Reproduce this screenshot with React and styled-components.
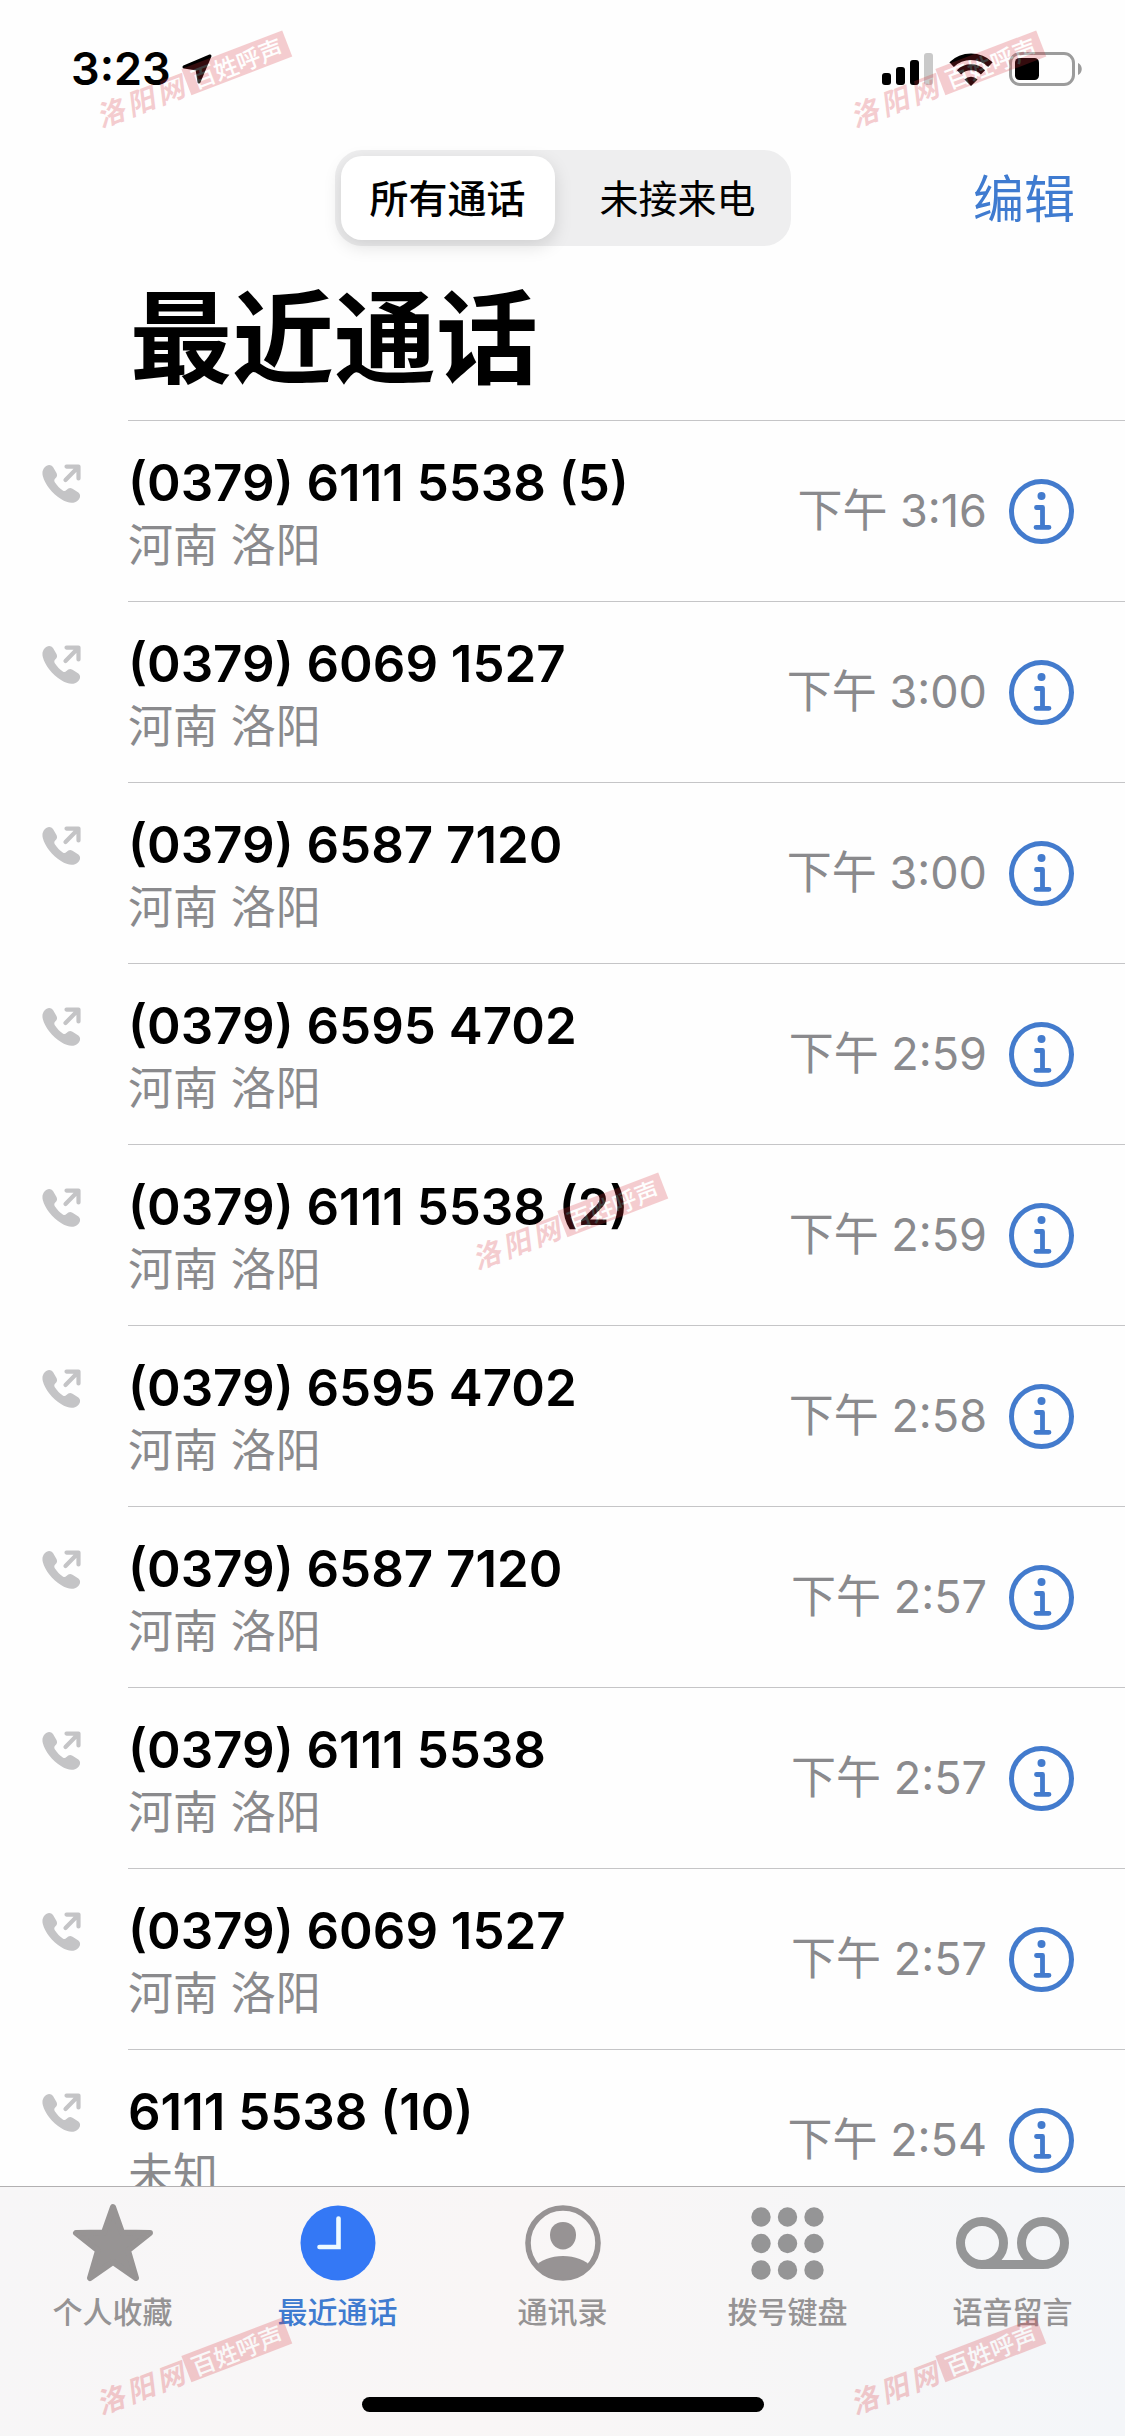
import React, { useState } from "react";
import styled, { createGlobalStyle } from "styled-components";

const GlobalStyle = createGlobalStyle`
  * { box-sizing: border-box; }
  body { margin: 0; background: #fefefe; }
  button { border: 0; padding: 0; background: none; font: inherit; color: inherit; cursor: pointer; }
  svg { display: block; }
`;

const Screen = styled.div`
  position: relative;
  display: flex;
  flex-direction: column;
  height: 100vh;
  overflow: hidden;
  background: #fefefe;
  color: #000;
  font-family: Inter, "Noto Sans CJK SC", sans-serif;
`;

const StatusBar = styled.div`
  flex: none;
  display: flex;
  align-items: center;
  justify-content: space-between;
  height: 138px;
  padding: 0 42px 0 71px;
`;

const StatusGroup = styled.div`
  display: flex;
  align-items: center;
  gap: ${(p) => p.$gap}px;
`;

const Clock = styled.time`
  font-size: 45px;
  line-height: 54px;
  font-weight: 600;
`;

const NavBar = styled.header`
  flex: none;
  display: grid;
  grid-template-columns: 1fr auto 1fr;
  align-items: center;
  height: 120px;
  padding: 0 50px;
`;

const Segmented = styled.div`
  grid-column: 2;
  display: flex;
  gap: 16px;
  padding: 6px;
  border-radius: 27px;
  background: #eeeeef;
`;

const Segment = styled.button`
  width: 214px;
  height: 84px;
  padding-top: 2px;
  border-radius: 21px;
  font-size: 39px;
  line-height: 48px;
  font-weight: ${(p) => (p.$active ? 500 : 400)};
  background: ${(p) => (p.$active ? "#fff" : "transparent")};
  box-shadow: ${(p) => (p.$active ? "0 6px 18px rgba(0, 0, 0, 0.13)" : "none")};
`;

const EditButton = styled.button`
  justify-self: end;
  padding-top: 4px;
  font-size: 51px;
  line-height: 60px;
  color: #3f7bd0;
`;

const Title = styled.h1`
  flex: none;
  margin: 0;
  padding: 20px 0 20px 130px;
  font-size: 102px;
  line-height: 122px;
  font-weight: 700;
`;

const CallList = styled.ul`
  flex: 1;
  min-height: 0;
  margin: 0;
  padding: 0;
  list-style: none;
  overflow-y: auto;
  scrollbar-width: none;
`;

const CallRow = styled.li`
  display: grid;
  grid-template-columns: 128px 1fr;
`;

const Direction = styled.div`
  padding: 44px 0 0 42px;
`;

const CallBody = styled.div`
  display: flex;
  align-items: center;
  justify-content: space-between;
  height: 181px;
  padding-right: 51px;
  border-top: 1px solid #c5c5c7;
`;

const Caller = styled.div`
  padding-top: 8px;
`;

const Number = styled.div`
  font-size: 51px;
  line-height: 62px;
  font-weight: 600;
`;

const Place = styled.div`
  font-size: 45px;
  line-height: 64px;
  color: #8a8a8d;
`;

const CallMeta = styled.div`
  display: flex;
  align-items: center;
  gap: 22px;
  font-size: 45px;
  line-height: 54px;
  color: #8a8a8d;
`;

const TabBar = styled.nav`
  flex: none;
  display: grid;
  grid-template-columns: repeat(5, 1fr);
  align-content: start;
  height: 250px;
  border-top: 1px solid #b2b0b1;
  background: linear-gradient(100deg, #f7f6f7 0%, #f9f6f6 45%, #f6f6f7 75%, #f4f6f9 100%);
`;

const Tab = styled.button`
  display: flex;
  flex-direction: column;
  align-items: center;
  padding-top: 14px;
  font-size: 30px;
  line-height: 40px;
  font-weight: 500;
  color: ${(p) => (p.$active ? "#3f7bd0" : "#959394")};
`;

const TabIcon = styled.span`
  display: grid;
  place-items: center;
  height: 84px;
  margin-bottom: 7px;
`;

const HomeIndicator = styled.div`
  position: absolute;
  left: 50%;
  bottom: 24px;
  width: 402px;
  height: 15px;
  border-radius: 8px;
  background: #000;
  transform: translateX(-50%);
`;

const Watermark = styled.div`
  position: absolute;
  left: ${(p) => p.$x}px;
  top: ${(p) => p.$y}px;
  display: flex;
  align-items: center;
  gap: 4px;
  width: 204px;
  height: 28px;
  transform: rotate(-21deg);
  pointer-events: none;
  opacity: 0.24;
  color: #d8323c;
`;

const MarkName = styled.span`
  display: flex;
  gap: 4px;
  font-family: "Noto Sans CJK SC", sans-serif;
  font-size: 28px;
  line-height: 28px;
  font-weight: 700;
  font-style: italic;
`;

const MarkBadge = styled.span`
  flex: 1;
  font-family: "Noto Sans CJK SC", sans-serif;
  font-size: 24px;
  line-height: 28px;
  font-weight: 500;
  text-align: center;
  color: #fff;
  background: #d8323c;
`;

const LocationArrow = () => (
  <svg width="30" height="30" viewBox="0 0 30 30" aria-hidden="true">
    <path d="M28 2 L17 28 L15 15 L2 13 Z" fill="#000" stroke="#000" strokeWidth="3" strokeLinejoin="round" />
  </svg>
);

const SignalIcon = () => (
  <svg width="51" height="32" viewBox="0 0 51 32" aria-hidden="true">
    <rect x="0" y="20" width="9" height="12" rx="3" />
    <rect x="14" y="14" width="9" height="18" rx="3" />
    <rect x="28" y="7" width="9" height="25" rx="3" />
    <rect x="42" y="0" width="9" height="32" rx="3" fill="#c9c9c9" />
  </svg>
);

const WifiIcon = () => (
  <svg width="44" height="33" viewBox="0 0 44 33" aria-hidden="true">
    <path d="M2.6 11.6 A28 28 0 0 1 41.4 11.6" fill="none" stroke="#000" strokeWidth="6.4" />
    <path d="M10 19.3 A17 17 0 0 1 34 19.3" fill="none" stroke="#000" strokeWidth="6" />
    <path d="M22 33 L15.4 26.4 A9.6 9.6 0 0 1 28.6 26.4 Z" />
  </svg>
);

const BatteryIcon = () => (
  <svg width="74" height="34" viewBox="0 0 74 34" aria-hidden="true">
    <rect x="1.5" y="1.5" width="63" height="31" rx="9.5" fill="none" stroke="#9c9c9c" strokeWidth="3" />
    <rect x="6" y="6" width="24" height="22" rx="4.5" />
    <path d="M69 11 C74 13 74 21 69 23 Z" fill="#9c9c9c" />
  </svg>
);

const OutgoingIcon = () => (
  <svg width="39" height="39" viewBox="0 0 39 39" role="img" aria-label="已拨电话" fill="#c4c4c6">
    <path d="M2.5 3.5 C5 0.2 9 0 11 3 L14.2 8.6 C15.6 11 15.2 12.5 13.2 14.6 C12 16 12 17 13 18.6 C15.3 22 17.5 24.3 20.8 26.5 C22.3 27.4 23.3 27.2 24.4 26 C26.5 24 28.2 23.4 30.5 24.8 L36 28.3 C39 30.3 38.6 33.8 35.8 36.4 C32 40 26 39.4 19 35 C10 29.2 3 20.5 0.8 12 C0 8.5 0.5 6 2.5 3.5 Z" />
    <path d="M24.500 2.600 H36.500 V14.500 M36 3.200 L23.500 16" fill="none" stroke="#c4c4c6" strokeWidth="4.200" strokeLinecap="round" strokeLinejoin="round" />
  </svg>
);

const InfoIcon = () => (
  <svg width="65" height="65" viewBox="0 0 65 65" aria-hidden="true">
    <circle cx="32.5" cy="32.5" r="30" fill="none" stroke="#437bcd" strokeWidth="5" />
    <circle cx="32.5" cy="17" r="4" fill="#437bcd" />
    <path d="M27.5 28.5 H33.500 V48 M27 48.3 H40" fill="none" stroke="#437bcd" strokeWidth="4.800" strokeLinecap="round" strokeLinejoin="round" />
  </svg>
);

const StarIcon = () => (
  <svg width="82" height="80" viewBox="0 0 82 80" aria-hidden="true">
    <path
      d="M41 4 L50 29.500 L78 30 L56 47.500 L64 75 L41 59 L18 75 L26 47.500 L4 30 L32 29.500 Z"
      fill="#979494"
      stroke="#979494"
      strokeWidth="6"
      strokeLinejoin="round"
    />
  </svg>
);

const RecentsIcon = () => (
  <svg width="76" height="76" viewBox="0 0 76 76" aria-hidden="true">
    <circle cx="38" cy="38" r="37.500" fill="#3478f5" />
    <path d="M38.500 13.500 V42 H19.500" fill="none" stroke="#eefaff" strokeWidth="4.600" strokeLinecap="round" />
  </svg>
);

const ContactIcon = () => (
  <svg width="76" height="76" viewBox="0 0 76 76" aria-hidden="true">
    <defs>
      <clipPath id="contactDisc">
        <circle cx="38" cy="38" r="36" />
      </clipPath>
    </defs>
    <circle cx="38" cy="38" r="35" fill="none" stroke="#979394" strokeWidth="5.600" />
    <path d="M38 17 C46 17 51 22.500 51 30 C51 38 45.500 44.500 38 44.500 C30.500 44.500 25 38 25 30 C25 22.500 30 17 38 17 Z" fill="#979394" />
    <path d="M10 62 C15 55 26 51 38 51 C50 51 61 55 66 62 L60 76 H16 Z" fill="#979394" clipPath="url(#contactDisc)" />
  </svg>
);

const KeypadIcon = () => (
  <svg width="73" height="73" viewBox="0 0 73 73" fill="#959596" aria-hidden="true">
    {[10, 36.5, 63].map((y) => [10, 36.5, 63].map((x) => <circle key={`${x}-${y}`} cx={x} cy={y} r="9.700" />))}
  </svg>
);

const VoicemailIcon = () => (
  <svg width="113" height="52" viewBox="0 0 113 52" fill="none" stroke="#959697" strokeWidth="9" aria-hidden="true">
    <circle cx="26" cy="26" r="21.500" />
    <circle cx="87" cy="26" r="21.500" />
    <path d="M26 47.500 H87" />
  </svg>
);

const calls = [
  ["(0379) 6111 5538 (5)", "河南 洛阳", "下午 3:16"],
  ["(0379) 6069 1527", "河南 洛阳", "下午 3:00"],
  ["(0379) 6587 7120", "河南 洛阳", "下午 3:00"],
  ["(0379) 6595 4702", "河南 洛阳", "下午 2:59"],
  ["(0379) 6111 5538 (2)", "河南 洛阳", "下午 2:59"],
  ["(0379) 6595 4702", "河南 洛阳", "下午 2:58"],
  ["(0379) 6587 7120", "河南 洛阳", "下午 2:57"],
  ["(0379) 6111 5538", "河南 洛阳", "下午 2:57"],
  ["(0379) 6069 1527", "河南 洛阳", "下午 2:57"],
  ["6111 5538 (10)", "未知", "下午 2:54"],
];

const tabs = [
  ["个人收藏", StarIcon],
  ["最近通话", RecentsIcon],
  ["通讯录", ContactIcon],
  ["拨号键盘", KeypadIcon],
  ["语音留言", VoicemailIcon],
];

const filters = ["所有通话", "未接来电"];

const marks = [
  [90, 66],
  [844, 66],
  [466, 1208],
  [90, 2353],
  [844, 2353],
];

export default function App() {
  const [filter, setFilter] = useState(filters[0]);
  return (
    <Screen>
      <GlobalStyle />
      <StatusBar>
        <StatusGroup $gap={11}>
          <Clock>3:23</Clock>
          <LocationArrow />
        </StatusGroup>
        <StatusGroup $gap={16}>
          <SignalIcon />
          <WifiIcon />
          <BatteryIcon />
        </StatusGroup>
      </StatusBar>
      <NavBar>
        <Segmented>
          {filters.map((name) => (
            <Segment key={name} type="button" $active={name === filter} aria-pressed={name === filter} onClick={() => setFilter(name)}>
              {name}
            </Segment>
          ))}
        </Segmented>
        <EditButton type="button">编辑</EditButton>
      </NavBar>
      <Title>最近通话</Title>
      <CallList>
        {calls.map(([number, place, time], i) => (
          <CallRow key={i}>
            <Direction>
              <OutgoingIcon />
            </Direction>
            <CallBody>
              <Caller>
                <Number>{number}</Number>
                <Place>{place}</Place>
              </Caller>
              <CallMeta>
                <time>{time}</time>
                <button type="button" aria-label="详细信息">
                  <InfoIcon />
                </button>
              </CallMeta>
            </CallBody>
          </CallRow>
        ))}
      </CallList>
      <TabBar>
        {tabs.map(([label, Icon]) => (
          <Tab key={label} type="button" $active={label === "最近通话"}>
            <TabIcon>
              <Icon />
            </TabIcon>
            {label}
          </Tab>
        ))}
      </TabBar>
      <HomeIndicator />
      {marks.map(([x, y]) => (
        <Watermark key={`${x}-${y}`} $x={x} $y={y} aria-hidden="true">
          <MarkName>
            <span>洛</span>
            <span>阳</span>
            <span>网</span>
          </MarkName>
          <MarkBadge>百姓呼声</MarkBadge>
        </Watermark>
      ))}
    </Screen>
  );
}
